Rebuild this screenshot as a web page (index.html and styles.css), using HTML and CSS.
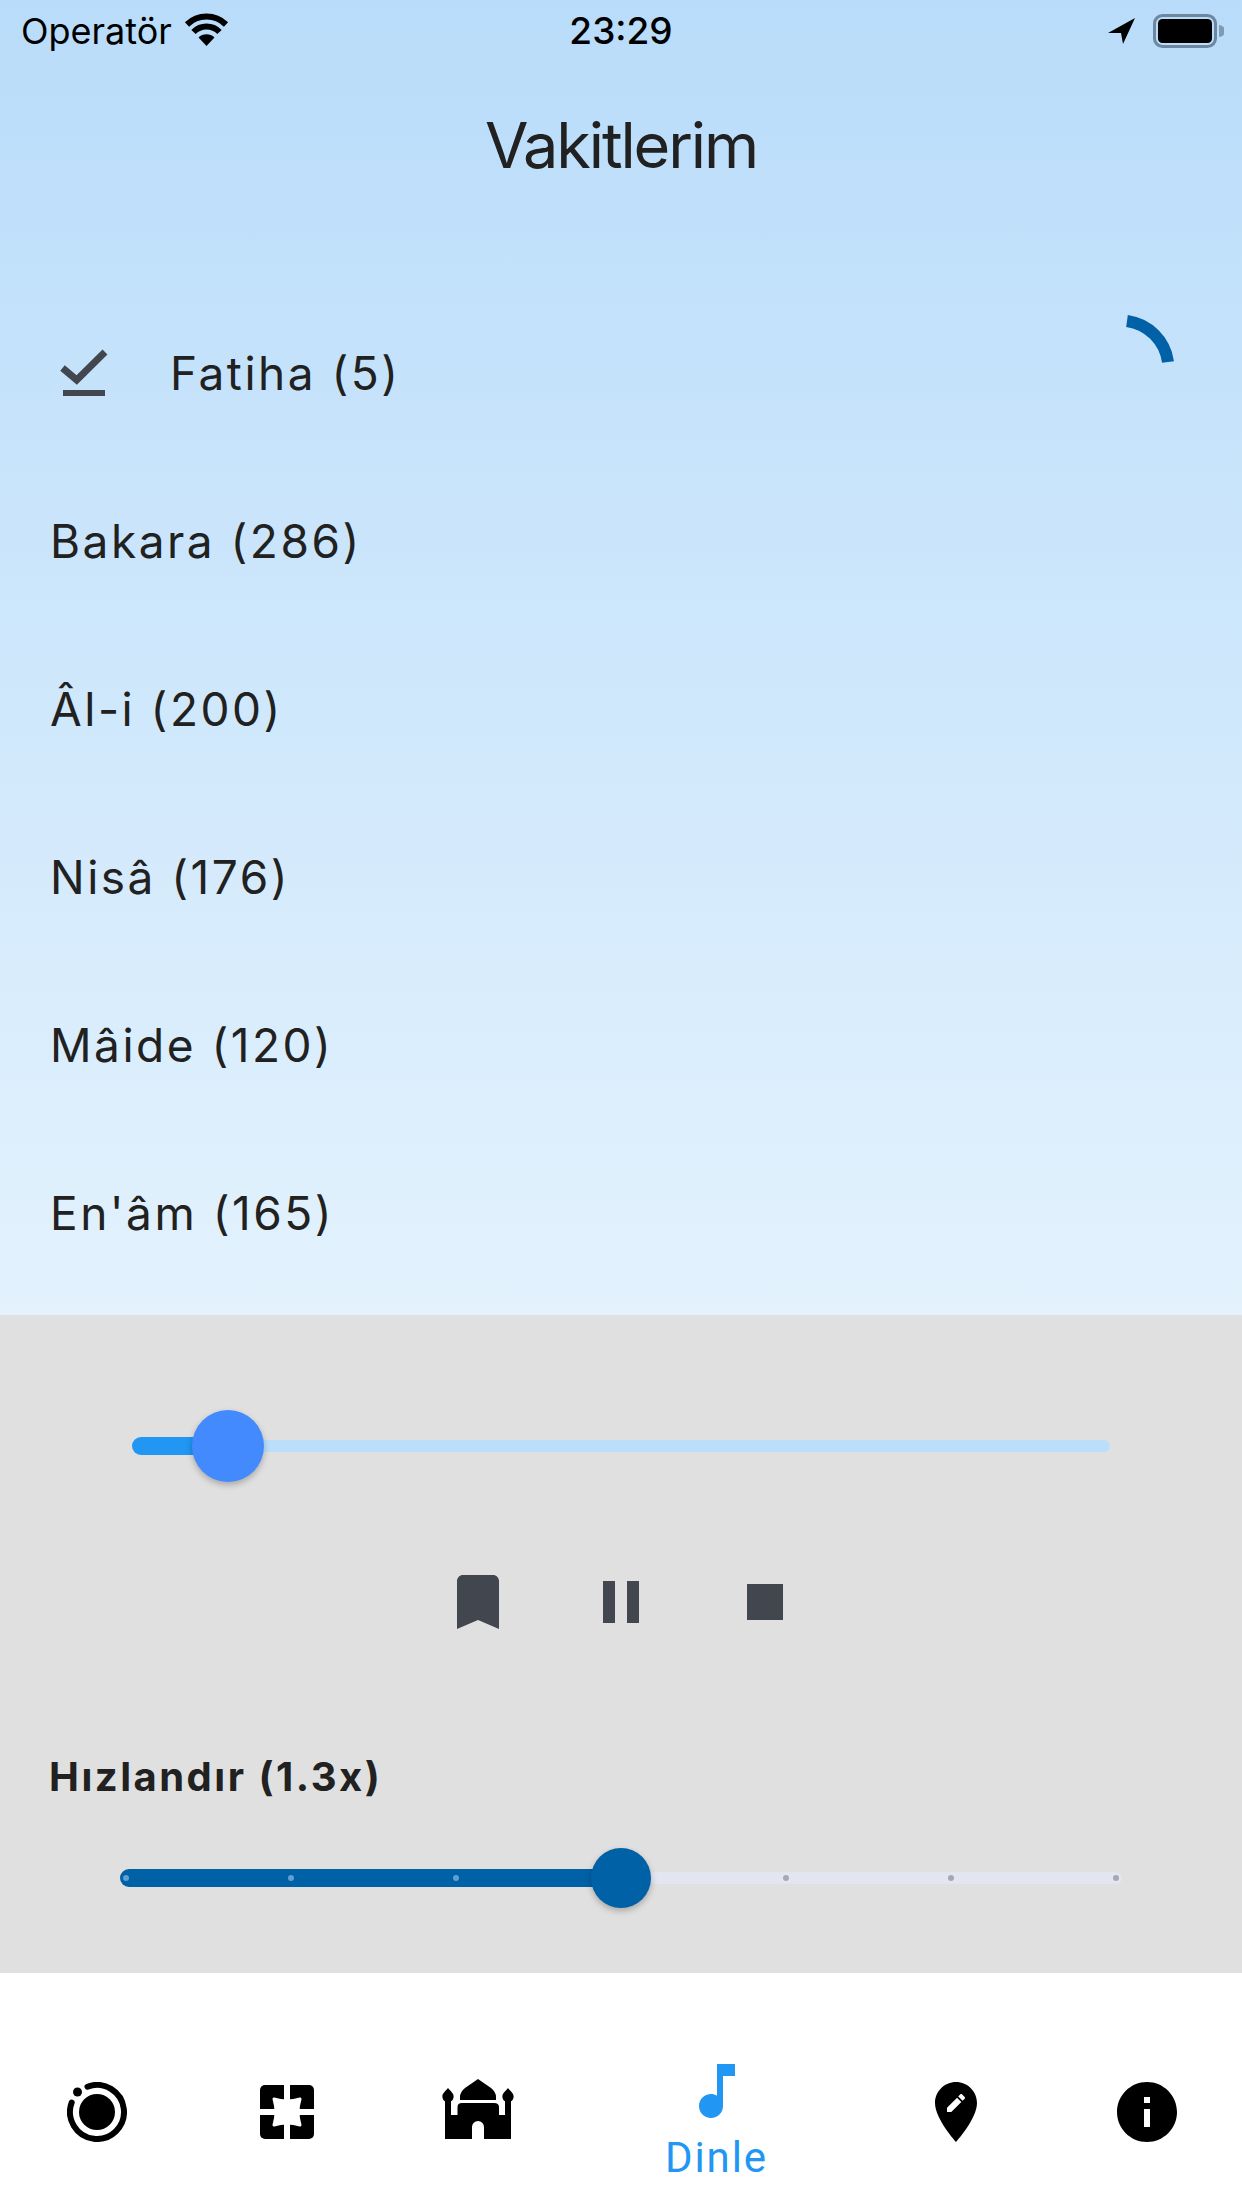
FILE: index.html
```html
<!DOCTYPE html>
<html lang="tr">
<head>
<meta charset="utf-8">
<title>Vakitlerim</title>
<link rel="stylesheet" href="styles.css">
</head>
<body>
<div class="app">
  <div class="top">
    <div class="status">
      <div class="status-left">
        <span class="carrier">Operatör</span>
        <svg class="wifi" width="45" height="33" viewBox="0 0 45 33"><path d="M22.5 33 L14.5 24.5 A11.5 11.5 0 0 1 30.5 24.5Z" fill="#000"/><path d="M9.5 19 A18 18 0 0 1 35.5 19" fill="none" stroke="#000" stroke-width="6"/><path d="M3 11.5 A28 28 0 0 1 42 11.5" fill="none" stroke="#000" stroke-width="6"/></svg>
      </div>
      <span class="time">23:29</span>
      <div class="status-right">
        <svg width="27" height="26" viewBox="0 0 27 26"><path d="M27 0 L0 15 H13 L15 26Z" fill="#000"/></svg>
        <svg width="71" height="34" viewBox="0 0 71 34"><rect x="1.5" y="1.5" width="61" height="31" rx="8" fill="none" stroke="#6d87a1" stroke-width="3"/><rect x="5" y="5" width="54" height="24" rx="4.5" fill="#000"/><path d="M66 11 A6 6 0 0 1 66 23Z" fill="#7f9ab5"/></svg>
      </div>
    </div>
    <h1 class="title">Vakitlerim</h1>
    <ul class="list">
      <li class="row">
        <span class="lead"><svg width="72" height="72" viewBox="0 0 72 72"><path d="M10.500 31 L24.700 43 L53 15" fill="none" stroke="#42474f" stroke-width="7"/><rect x="11" y="53" width="42" height="6" fill="#42474f"/></svg></span>
        <span class="name">Fatiha (5)</span>
        <svg class="spin" width="60" height="60" viewBox="0 0 60 60"><path d="M9 7 A48 48 0 0 1 50 48" fill="none" stroke="#0061a6" stroke-width="12"/></svg>
      </li>
      <li class="row"><span class="name">Bakara (286)</span></li>
      <li class="row"><span class="name">Âl-i (200)</span></li>
      <li class="row"><span class="name">Nisâ (176)</span></li>
      <li class="row"><span class="name">Mâide (120)</span></li>
      <li class="row"><span class="name">En'âm (165)</span></li>
    </ul>
  </div>

  <div class="panel">
    <div class="slider seek">
      <div class="track">
        <div class="active" style="width:96px"></div>
        <div class="rest"></div>
      </div>
      <div class="thumb" style="left:60px"></div>
    </div>

    <div class="controls">
      <svg width="72" height="72" viewBox="0 0 24 24"><path d="M17 3H7c-1.1 0-2 .9-2 2v16l7-3 7 3V5c0-1.100-.9-2-2-2z"/></svg>
      <svg width="72" height="72" viewBox="0 0 24 24"><path d="M6 19h4V5H6v14zm8-14v14h4V5h-4z"/></svg>
      <svg width="72" height="72" viewBox="0 0 24 24"><path d="M6 6h12v12H6z"/></svg>
    </div>

    <div class="speed-label">Hızlandır (1.3x)</div>

    <div class="slider speed">
      <div class="track">
        <div class="active" style="width:500px"></div>
        <div class="rest"></div>
        <div class="ticks">
          <i class="on"></i><i class="on"></i><i class="on"></i><i class="on"></i><i></i><i></i><i></i>
        </div>
      </div>
      <div class="thumb" style="left:471px"></div>
    </div>
  </div>

  <nav class="nav">
    <div class="nav-item">
      <svg class="orbit" width="60" height="60" viewBox="0 0 60 60"><circle cx="30" cy="30" r="18"/><circle cx="10.500" cy="10" r="4.500"/><path d="M20.500 4.700 A27 27 0 1 1 4.700 20.500" fill="none" stroke="#000" stroke-width="6" stroke-linecap="round"/></svg>
    </div>
    <div class="nav-item">
      <svg class="gift" width="54" height="54" viewBox="0 0 54 54"><path d="M5 0H24V24H0V5A5 5 0 0 1 5 0Z"/><path d="M30 0H49A5 5 0 0 1 54 5V24H30Z"/><path d="M0 30H24V54H5A5 5 0 0 1 0 49Z"/><path d="M30 30H54V49A5 5 0 0 1 49 54H30Z"/><path d="M14 14 Q27 18 40 14 Q36 27 40 40 Q27 36 14 40 Q18 27 14 14Z" fill="#fff" stroke="#fff" stroke-width="3" stroke-linejoin="round"/></svg>
    </div>
    <div class="nav-item">
      <svg class="mosque" width="72" height="60" viewBox="0 0 72 60"><path d="M36 0 L49 9 Q54 13 54 18 V21 H18 V18 Q18 13 23 9Z"/><path d="M3 60 V22 H9 V36 H15.500 V28 Q15.500 24 20 24 H52 Q57 24 57 28 V36 H63 V22 H69 V60 H42 V48 A6 6 0 0 0 30 48 V60Z"/><path d="M6 9 C8 12 12 14 11.600 18 C11.400 21 9 23 6 23 C3 23 .6 21 .4 18 C0 14 4 12 6 9Z"/><path d="M66 9 C68 12 72 14 71.600 18 C71.400 21 69 23 66 23 C63 23 60.600 21 60.400 18 C60 14 64 12 66 9Z"/></svg>
    </div>
    <div class="nav-item selected">
      <svg width="72" height="72" viewBox="0 0 24 24"><path d="M12 3v10.550c-.59-.34-1.270-.55-2-.55-2.210 0-4 1.790-4 4s1.790 4 4 4 4-1.790 4-4V7h4V3h-6z"/></svg>
      <span class="nav-label">Dinle</span>
    </div>
    <div class="nav-item shifted">
      <svg width="72" height="72" viewBox="0 0 24 24"><path d="M12 2C8.140 2 5 5.140 5 9c0 5.250 7 13 7 13s7-7.750 7-13c0-3.870-3.130-7-7-7zm-1.560 10H9v-1.440l3.350-3.340 1.430 1.430L10.440 12zm4.450-4.450l-.7.7-1.440-1.440.7-.7c.15-.15.39-.15.54 0l.9.9c.15.15.15.39 0 .54z"/></svg>
    </div>
    <div class="nav-item shifted">
      <svg width="72" height="72" viewBox="0 0 24 24"><path d="M12 2C6.480 2 2 6.480 2 12s4.480 10 10 10 10-4.480 10-10S17.520 2 12 2zm1 15h-2v-6h2v6zm0-8h-2V7h2v2z"/></svg>
    </div>
  </nav>
</div>
</body>
</html>
```

FILE: styles.css
```css
* { box-sizing: border-box; }
html, body { margin: 0; padding: 0; }
body { font-family: Inter, Roboto, "Liberation Sans", sans-serif; background: #fff; }

.app { width: 1242px; height: 2208px; display: flex; flex-direction: column; overflow: hidden; }

.top { height: 1315px; background: linear-gradient(to bottom, #b9dcfa 0%, #e3f2fd 100%); display: flex; flex-direction: column; }

.status { height: 60px; display: grid; grid-template-columns: 1fr auto 1fr; align-items: center; color: #000; padding-top: 2px; }
.status-left { display: flex; align-items: center; gap: 12px; padding-left: 21px; }
.status-right { display: flex; align-items: center; justify-content: flex-end; gap: 18px; padding-right: 18px; }
.carrier { font-size: 36px; line-height: 58px; }
.wifi { margin: -3px 0 0 0; }
.time { font-size: 37px; font-weight: 500; line-height: 58px; }

.title { margin: 0; height: 229px; padding-top: 50px; text-align: center; font-size: 63px; font-weight: 400; line-height: 70px; letter-spacing: -2.1px; color: #212121; }

.list { list-style: none; margin: 0; padding: 0; }
.row { height: 168px; padding: 0 50px; display: flex; align-items: center; }
.lead { width: 120px; display: flex; }
.lead svg { margin-left: 2px; }
.name { font-size: 46px; letter-spacing: 2.5px; color: #212121; }
.spin { margin-left: auto; margin-right: 14px; margin-top: -58px; }

.panel { height: 658px; background: #e0e0e0; padding-top: 95px; }

.slider { position: relative; height: 72px; display: flex; align-items: center; }
.track { position: relative; display: flex; align-items: center; width: 100%; }
.active { height: 18px; border-radius: 9px 0 0 9px; flex: none; }
.rest { height: 12px; flex: 1; border-radius: 0 6px 6px 0; }
.thumb { position: absolute; top: 50%; border-radius: 50%; box-shadow: 0 3px 6px rgba(0, 0, 0, .25); }

.seek { margin: 0 132px; }
.seek .active { background: #2196f3; }
.seek .rest { background: #bbdefb; }
.seek .thumb { width: 72px; height: 72px; margin-top: -36px; background: #448aff; }

.controls { margin-top: 84px; display: flex; justify-content: center; gap: 72px; }
.controls svg { fill: #42474f; display: block; }
.controls svg:first-child { margin-left: 1px; margin-right: -1px; }

.speed-label { margin: 114px 0 0 49px; font-size: 40px; font-weight: 700; line-height: 50px; letter-spacing: 2.5px; color: #212121; }

.speed { margin: 40px 120px 0; }
.speed .active { background: #0061a6; }
.speed .rest { background: #e3e5f0; }
.speed .thumb { width: 60px; height: 60px; margin-top: -30px; background: #0061a6; }
.ticks { position: absolute; left: 3px; right: 3px; top: 50%; margin-top: -3px; display: flex; justify-content: space-between; }
.ticks i { width: 6px; height: 6px; border-radius: 50%; background: #a7a8b3; }
.ticks i.on { background: #5f9fd3; }

.nav { height: 235px; background: #fff; display: flex; }
.nav-item { flex: 1; display: flex; flex-direction: column; align-items: center; padding-top: 103px; }
.nav-item svg { display: block; fill: #000; }
.nav-item.shifted svg { margin-left: 2px; }
.orbit { margin: 6px 0 0 3px; }
.gift { margin-top: 9px; }
.mosque { margin-top: 3px; }
.nav-item.selected { flex: 1.5; padding-top: 82px; color: #2196f3; }
.nav-item.selected svg { fill: #2196f3; }
.nav-label { font-family: Roboto, sans-serif; font-size: 42px; line-height: 48px; letter-spacing: 1.9px; margin-top: 7px; }
```
